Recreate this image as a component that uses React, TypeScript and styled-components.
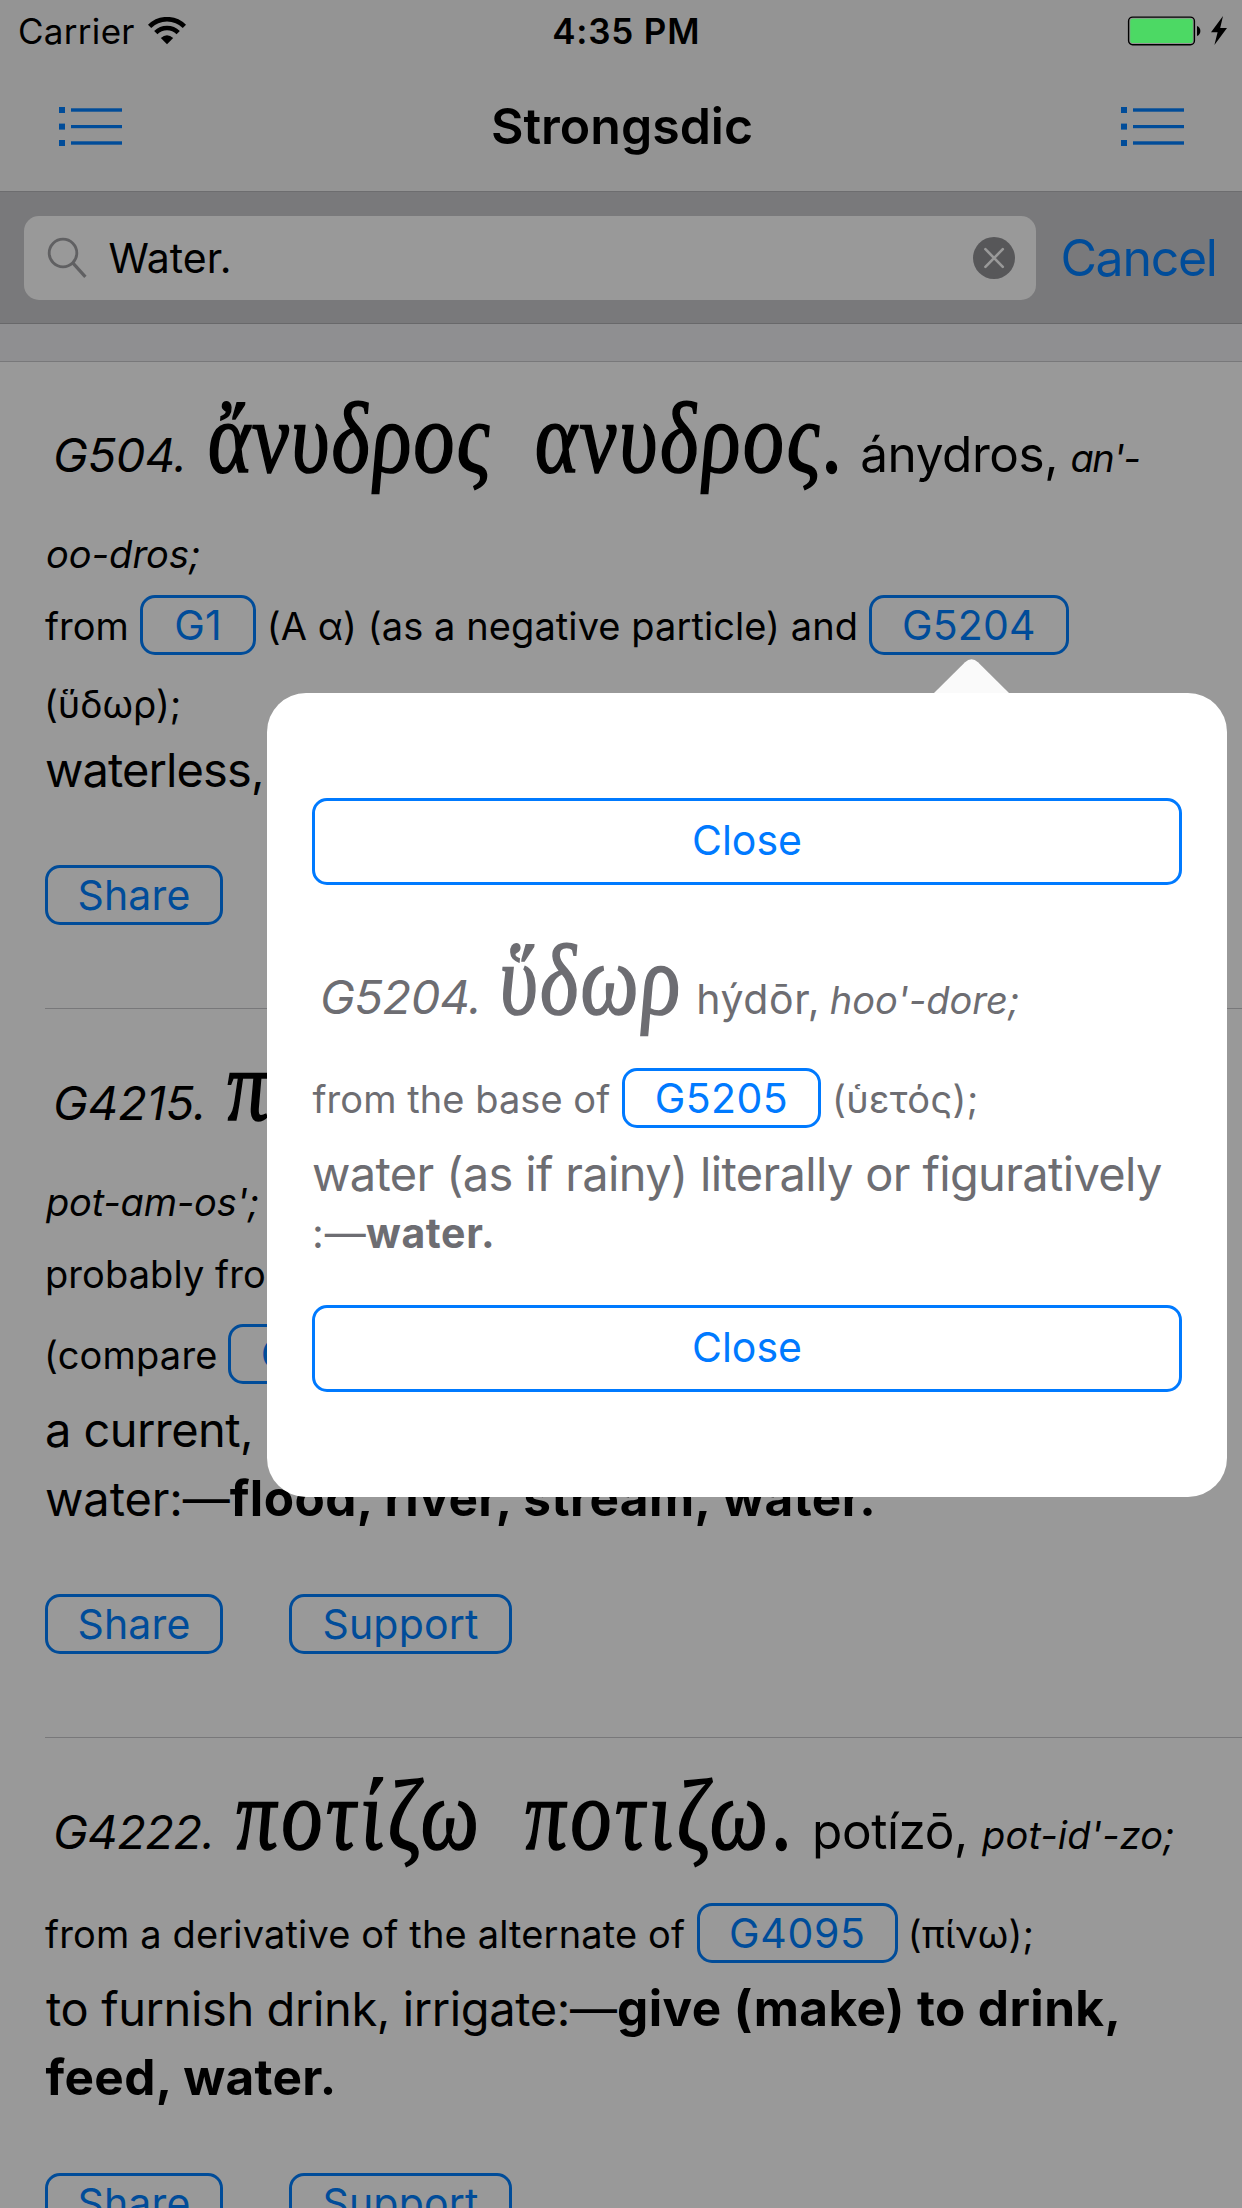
import React from 'react';
import styled, { createGlobalStyle } from 'styled-components';

const GlobalStyle = createGlobalStyle`
  * { box-sizing: border-box; }
  html, body { margin: 0; padding: 0; background: #999; }
  body { width: 1242px; height: 2208px; overflow: hidden; }
`;

const Screen = styled.main`
  position: relative;
  width: 1242px;
  height: 2208px;
  overflow: hidden;
  display: flex;
  flex-direction: column;
  background: #999;
  color: #000;
  font-family: Inter, 'Liberation Sans', sans-serif;
`;

/* ---------- bars ---------- */

const StatusBar = styled.div`
  flex: none;
  display: grid;
  grid-template-columns: 1fr auto 1fr;
  align-items: center;
  height: 60px;
  padding: 1px 14px 0 18px;
  background: #949494;
  font-size: 35px;
  line-height: 42px;
`;

const Carrier = styled.div`
  display: flex;
  align-items: center;
  gap: 13px;
  letter-spacing: 0.3px;
`;

const Clock = styled.div`
  padding-left: 6.5px;
  font-weight: 600;
  letter-spacing: 0.81px;
`;

const Power = styled.div`
  display: flex;
  justify-content: flex-end;
  align-items: center;
`;

const NavBar = styled.header`
  flex: none;
  display: flex;
  align-items: center;
  justify-content: space-between;
  height: 132px;
  padding: 1px 57px 0 59px;
  background: #949494;
  border-bottom: 1px solid #6d6d6f;
`;

const Title = styled.h1`
  margin: 0;
  font-size: 50px;
  font-weight: 600;
  line-height: 60px;
`;

const SearchBar = styled.div`
  flex: none;
  display: flex;
  align-items: center;
  height: 132px;
  padding: 0 24px;
  background: #79797b;
  border-bottom: 1px solid #68686a;
`;

const SearchField = styled.div`
  display: flex;
  align-items: center;
  width: 1012px;
  height: 84px;
  padding: 0 21px 0 23px;
  border-radius: 15px;
  background: #999;
  font-size: 41px;
  line-height: 50px;
`;

const Query = styled.span`
  flex: 1;
  margin-left: 19.5px;
`;

const Cancel = styled.span`
  margin-left: 24.4px;
  color: #004c99;
  font-size: 50px;
  line-height: 60px;
  letter-spacing: -1.29px;
`;

const SectionGap = styled.div`
  flex: none;
  height: 38px;
  background: #8f8f91;
  border-bottom: 1px solid #78787a;
`;

/* ---------- dictionary text ---------- */

const Entry = styled.article`
  flex: none;
  margin-left: 45px;
  padding: 64px 0 83px;
  border-bottom: 1px solid #78787a;
  &:first-of-type { padding-top: 63px; }
`;

const Line = styled.div<{ $gap?: number; $h?: number }>`
  height: ${p => p.$h ?? 65}px;
  line-height: ${p => p.$h ?? 65}px;
  margin-top: ${p => p.$gap ?? 0}px;
  font-size: 40px;
  white-space: nowrap;
`;

const Run = styled.span<{ $before?: number; $track?: number }>`
  line-height: 0;
  margin-left: ${p => p.$before ?? 0}px;
  letter-spacing: ${p => p.$track ?? 0}px;
`;

const Num = styled(Run)`
  font-size: 47px;
  font-style: italic;
`;
const Body = styled(Run)`
  font-size: 47px;
`;
const Note = styled(Run)`
  font-size: 38px;
`;
const Say = styled(Note)`
  font-style: italic;
`;
const Latin = styled(Run)<{ $size?: number }>`
  font-size: ${p => p.$size ?? 49.5}px;
`;
const Gloss = styled(Run)`
  font-size: 49.5px;
  font-weight: 700;
`;
const Dash = styled(Run)`
  display: inline-block;
  width: 54px;
  font-size: 41px;
`;
const SmallGloss = styled(Run)`
  font-size: 41px;
  font-weight: 700;
`;

const Greek = styled(Run)<{ $width: number }>`
  display: inline-block;
  width: ${p => p.$width}px;
  font-family: 'Liberation Serif', 'DejaVu Serif', serif;
  font-size: 101px;
  font-style: italic;
  -webkit-text-stroke: 1.7px currentColor;
  transform: scaleX(0.82) skewX(4deg);
  transform-origin: left center;
`;

const Tag = styled.span<{ $before?: number; $width: number; $lit?: boolean; $track?: number }>`
  display: inline-block;
  width: ${p => p.$width}px;
  height: 60px;
  margin-left: ${p => p.$before ?? 0}px;
  border: 3px solid ${p => (p.$lit ? '#007aff' : '#004c99')};
  border-radius: 15px;
  color: ${p => (p.$lit ? '#007aff' : '#004c99')};
  font-size: 41px;
  line-height: 54px;
  letter-spacing: ${p => p.$track ?? 0.2}px;
  text-align: center;
`;

const Actions = styled.div`
  display: flex;
  gap: 66px;
  margin-top: 60px;
`;

/* ---------- popover ---------- */

const Popover = styled.section`
  position: absolute;
  left: 267px;
  top: 693px;
  width: 960px;
  height: 804px;
  padding: 105px 45px;
  border-radius: 39px;
  background: #fff;
  color: #6d6d72;
`;

const Arrow = styled.svg`
  position: absolute;
  left: 667px;
  top: -35px;
`;

const CloseButton = styled.button`
  display: flex;
  align-items: center;
  justify-content: center;
  width: 870px;
  height: 87px;
  padding: 0 0 3px;
  border: 3px solid #007aff;
  border-radius: 15px;
  background: none;
  color: #007aff;
  font: 400 41px/50px Inter, 'Liberation Sans', sans-serif;
`;

const PopoverText = styled.div`
  padding: 82px 0 45px;
`;

/* ---------- icons ---------- */

const WifiIcon = () => (
  <svg width="38" height="28" viewBox="0 0 38 28" fill="none" stroke="#000" strokeWidth="4.6">
    <path d="M1.6 9.4A24.6 24.6 0 0 1 36.4 9.4" />
    <path d="M7.8 15.6A15.8 15.8 0 0 1 30.2 15.6" />
    <path d="M12.8 21Q19 15.6 25.2 21L19 27.2Z" fill="#000" stroke="none" />
  </svg>
);

const BatteryIcon = () => (
  <svg width="101" height="32" viewBox="0 0 101 32">
    <rect x="1.6" y="2.1" width="65.8" height="27.6" rx="4" fill="none" stroke="#000" strokeWidth="1.4" />
    <rect x="3.2" y="3.7" width="62.6" height="24.4" rx="2.6" fill="#4cd964" />
    <path d="M70 11a5.4 5.4 0 0 1 0 10z" fill="#000" />
    <path d="M96 1L84 17.3h6.6L87.4 30.1L100 13.1h-6.8z" fill="#000" />
  </svg>
);

const ListIcon = () => (
  <svg width="64" height="42" viewBox="0 -2 64 42" fill="#004c99">
    <rect x="0" y="0" width="6" height="6" />
    <rect x="12" y="1.3" width="51" height="3.4" />
    <rect x="0" y="16.6" width="6" height="6" />
    <rect x="12" y="18" width="51" height="3.2" />
    <rect x="0" y="33" width="6" height="6" />
    <rect x="12" y="34.3" width="51" height="3.4" />
  </svg>
);

const SearchIcon = () => (
  <svg width="42" height="42" viewBox="0 0 42 42" fill="none" stroke="#606062" strokeWidth="2.8">
    <circle cx="16" cy="16" r="13.8" />
    <path d="M26 26.2L38.4 39.8" strokeWidth="3.2" />
  </svg>
);

const ClearIcon = () => (
  <svg width="42" height="42" viewBox="0 0 42 42">
    <circle cx="21" cy="21" r="21" fill="#575759" />
    <path d="M12.4 12.2L29.8 29.8M29.8 12.2L12.4 29.8" stroke="#999" strokeWidth="2.6" strokeLinecap="round" />
  </svg>
);

export default function App() {
  return (
    <Screen>
      <GlobalStyle />
      <StatusBar>
        <Carrier>Carrier<WifiIcon /></Carrier>
        <Clock>4:35 PM</Clock>
        <Power><BatteryIcon /></Power>
      </StatusBar>
      <NavBar>
        <ListIcon />
        <Title>Strongsdic</Title>
        <ListIcon />
      </NavBar>
      <SearchBar>
        <SearchField>
          <SearchIcon />
          <Query>Water.</Query>
          <ClearIcon />
        </SearchField>
        <Cancel>Cancel</Cancel>
      </SearchBar>
      <SectionGap />

      <Entry>
        <Line>
          <Num $before={8} $track={-0.4}>G504.</Num>
          <Greek $before={20} $width={284} $track={2.2}>ἄνυδρος</Greek>
          <Greek $before={43} $width={303} $track={2.8}>ανυδρος.</Greek>
          <Latin $before={23.7} $track={-0.44}>ánydros,</Latin>
          <Say $before={12.5} $track={-1.5}>an'-</Say>
        </Line>
        <Line $gap={31}><Say $before={1}>oo-dros;</Say></Line>
        <Line $gap={7}>
          <Note>from</Note>
          <Tag $before={11.2} $width={116}>G1</Tag>
          <Note $before={10.8} $track={0.08}>(A α) (as a negative particle) and</Note>
          <Tag $before={10.7} $width={200}>G5204</Tag>
        </Line>
        <Line $gap={13}><Note $before={-1}>(ὕδωρ);</Note></Line>
        <Line $gap={4}><Body $track={-0.9}>waterless,</Body></Line>
        <Actions>
          <Tag $width={178}>Share</Tag>
          <Tag $width={223}>Support</Tag>
        </Actions>
      </Entry>

      <Entry>
        <Line>
          <Num $before={8} $track={-0.1}>G4215.</Num>
          <Greek $before={19.5} $width={284}>ποταμός</Greek>
        </Line>
        <Line $gap={31}><Say $before={1} $track={-0.2}>pot-am-os';</Say></Line>
        <Line $gap={7}><Note $track={0.08}>probably from</Note></Line>
        <Line $gap={16}>
          <Note $before={-1} $track={0.2}>(compare</Note>
          <Tag $before={10} $width={200}>G4224</Tag>
        </Line>
        <Line $gap={13}><Body $track={-0.57}>a current,</Body></Line>
        <Line $gap={4}>
          <Body $track={-0.1}>water:—</Body>
          <Gloss $track={0.42}>flood, river, stream, water.</Gloss>
        </Line>
        <Actions>
          <Tag $width={178}>Share</Tag>
          <Tag $width={223}>Support</Tag>
        </Actions>
      </Entry>

      <Entry>
        <Line>
          <Num $before={8} $track={-0.6}>G4222.</Num>
          <Greek $before={20.5} $width={243} $track={5}>ποτίζω</Greek>
          <Greek $before={46} $width={266} $track={5}>ποτιζω.</Greek>
          <Latin $before={22.2} $track={-0.41}>potízō,</Latin>
          <Say $before={14.2} $track={0.1}>pot-id'-zo;</Say>
        </Line>
        <Line $gap={34}>
          <Note $track={0.15}>from a derivative of the alternate of</Note>
          <Tag $before={11.6} $width={201} $track={0.66}>G4095</Tag>
          <Note $before={10} $track={0.1}>(πίνω);</Note>
        </Line>
        <Line $gap={13}>
          <Body $before={1} $track={-0.39}>to furnish drink, irrigate:—</Body>
          <Gloss $before={0.5} $track={0.4}>give (make) to drink,</Gloss>
        </Line>
        <Line $gap={4}><Gloss $before={0.5} $track={0.35}>feed, water.</Gloss></Line>
        <Actions>
          <Tag $width={178}>Share</Tag>
          <Tag $width={223}>Support</Tag>
        </Actions>
      </Entry>

      <Popover>
        <Arrow width="76" height="35" viewBox="0 0 76 35">
          <path d="M0 35L31 4.2Q37.5 -1.6 44 4.2L75 35Z" fill="#fafafa" />
        </Arrow>
        <CloseButton>Close</CloseButton>
        <PopoverText>
          <Line>
            <Num $before={8} $track={-0.5}>G5204.</Num>
            <Greek $before={18} $width={179} $track={2.4}>ὕδωρ</Greek>
            <Latin $before={18} $size={41} $track={0.6}>hýdōr,</Latin>
            <Say $before={9.8}>hoo'-dore;</Say>
          </Line>
          <Line $gap={34}>
            <Note $before={0.5} $track={0.05}>from the base of</Note>
            <Tag $lit $before={11.6} $width={199} $track={0.4}>G5205</Tag>
            <Note $before={11} $track={0.4}>(ὑετός);</Note>
          </Line>
          <Line $gap={15} $h={61}><Body $track={-0.65}>water (as if rainy) literally or figuratively</Body></Line>
          <Line $h={53}>
            <Dash $track={1}>:—</Dash>
            <SmallGloss $track={0.65}>water.</SmallGloss>
          </Line>
        </PopoverText>
        <CloseButton>Close</CloseButton>
      </Popover>
    </Screen>
  );
}
